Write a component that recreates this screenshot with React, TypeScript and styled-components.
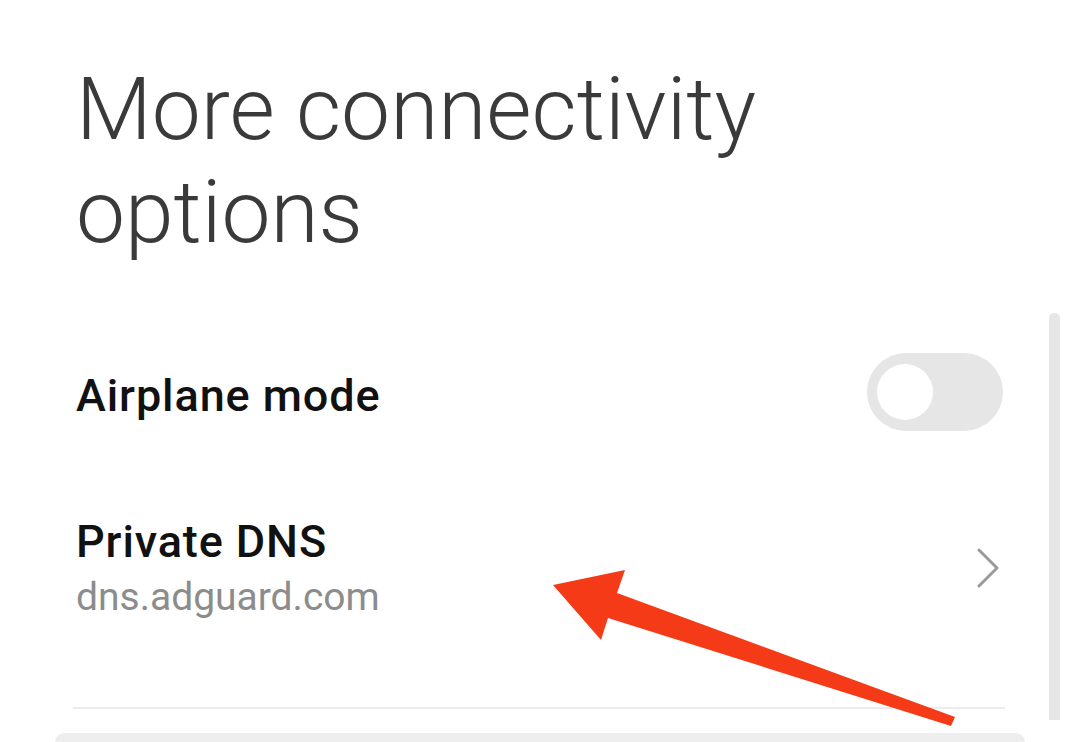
import React from "react";
import styled, { createGlobalStyle } from "styled-components";

const Global = createGlobalStyle`
  html, body { margin: 0; padding: 0; background: #ffffff; }
  body { font-family: Roboto, "Noto Sans", sans-serif; }
`;

const Screen = styled.div`
  position: relative;
  width: 1080px;
  height: 742px;
  overflow: hidden;
  background: #ffffff;
  display: flex;
  flex-direction: column;
`;

const Content = styled.div`
  display: flex;
  flex-direction: column;
  padding: 58px 77px 0 76px;
`;

const Title = styled.h1`
  margin: 0 0 53px 0;
  font-family: Roboto, sans-serif;
  font-weight: 300;
  font-size: 87.5px;
  line-height: 103px;
  color: #3a3a3a;
  letter-spacing: 0;
`;

const Row = styled.div<{ $h: number }>`
  height: ${(p) => p.$h}px;
  display: flex;
  align-items: center;
  justify-content: space-between;
`;

const TextBlock = styled.div`
  display: flex;
  flex-direction: column;
  margin-top: 4px;
`;

const RowTitle = styled.div<{ $lh: number; $shift?: number }>`
  font-family: Roboto, sans-serif;
  font-weight: 500;
  font-size: 45px;
  letter-spacing: 0.9px;
  line-height: ${(p) => p.$lh}px;
  margin-top: ${(p) => p.$shift ?? 0}px;
  color: #111111;
`;

const RowSub = styled.div`
  font-family: Roboto, sans-serif;
  font-weight: 400;
  font-size: 39px;
  line-height: 57px;
  color: #8c8c8c;
`;

const Toggle = styled.div`
  width: 136px;
  height: 78px;
  border-radius: 39px;
  background: #e6e6e6;
  display: flex;
  align-items: center;
  padding-left: 10px;
  box-sizing: border-box;
`;

const Knob = styled.div`
  width: 56px;
  height: 56px;
  border-radius: 50%;
  background: #ffffff;
`;

const Chevron = styled.svg`
  width: 28px;
  height: 44px;
`;

const Divider = styled.div`
  height: 2px;
  background: #ececec;
  margin: 38px -2px 0 -3px;
`;

const BottomCard = styled.div`
  margin: 24px 55px 0 55px;
  flex: 1;
  background: #eeeeee;
  border-radius: 44px 44px 0 0;
`;

const ScrollThumb = styled.div`
  position: absolute;
  left: 1049px;
  top: 313px;
  width: 11px;
  height: 407px;
  background: #e6e6e6;
  border-radius: 5px 5px 0 0;
`;

const Arrow = styled.svg`
  position: absolute;
  left: 0;
  top: 0;
  width: 1080px;
  height: 742px;
  pointer-events: none;
`;

export default function App() {
  return (
    <Screen>
      <Global />
      <Content>
        <Title>
          More connectivity
          <br />
          options
        </Title>
        <Row $h={150}>
          <RowTitle $lh={50} $shift={8}>
            Airplane mode
          </RowTitle>
          <Toggle>
            <Knob />
          </Toggle>
        </Row>
        <Row $h={202}>
          <TextBlock>
            <RowTitle $lh={55}>Private DNS</RowTitle>
            <RowSub>dns.adguard.com</RowSub>
          </TextBlock>
          <Chevron viewBox="0 0 28 44">
            <path
              d="M4 4 L22 22 L4 40"
              fill="none"
              stroke="#9a9a9a"
              strokeWidth="3"
              strokeLinecap="round"
              strokeLinejoin="round"
            />
          </Chevron>
        </Row>
        <Divider />
      </Content>
      <BottomCard />
      <ScrollThumb />
      <Arrow viewBox="0 0 1080 742">
        <polygon
          points="553,585 625,570 617,593 955,717 951,726 608,618 601,640"
          fill="#f53a17"
        />
      </Arrow>
    </Screen>
  );
}
